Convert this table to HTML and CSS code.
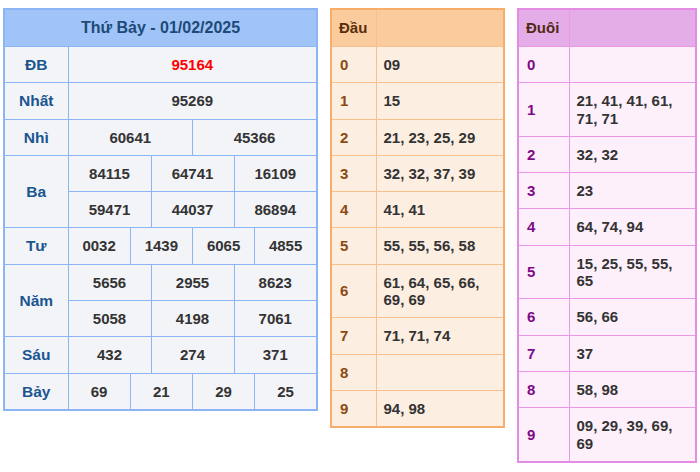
FILE: index.html
```html
<!DOCTYPE html>
<html lang="vi">
<head>
<meta charset="utf-8">
<title>XS Thứ Bảy 01/02/2025</title>
<link rel="stylesheet" href="styles.css">
</head>
<body>
<div class="wrap">
  <table class="kq">
    <colgroup>
      <col class="c-label">
      <col><col><col><col><col><col><col><col><col><col><col><col>
    </colgroup>
    <thead>
      <tr><th colspan="13" class="kq-head">Thứ Bảy - 01/02/2025</th></tr>
    </thead>
    <tbody>
      <tr><td class="lbl">ĐB</td><td colspan="12" class="db">95164</td></tr>
      <tr><td class="lbl">Nhất</td><td colspan="12">95269</td></tr>
      <tr><td class="lbl">Nhì</td><td colspan="6">60641</td><td colspan="6">45366</td></tr>
      <tr><td class="lbl" rowspan="2">Ba</td><td colspan="4">84115</td><td colspan="4">64741</td><td colspan="4">16109</td></tr>
      <tr><td colspan="4">59471</td><td colspan="4">44037</td><td colspan="4">86894</td></tr>
      <tr><td class="lbl">Tư</td><td colspan="3">0032</td><td colspan="3">1439</td><td colspan="3">6065</td><td colspan="3">4855</td></tr>
      <tr><td class="lbl" rowspan="2">Năm</td><td colspan="4">5656</td><td colspan="4">2955</td><td colspan="4">8623</td></tr>
      <tr><td colspan="4">5058</td><td colspan="4">4198</td><td colspan="4">7061</td></tr>
      <tr><td class="lbl">Sáu</td><td colspan="4">432</td><td colspan="4">274</td><td colspan="4">371</td></tr>
      <tr><td class="lbl">Bảy</td><td colspan="3">69</td><td colspan="3">21</td><td colspan="3">29</td><td colspan="3">25</td></tr>
    </tbody>
  </table>

  <table class="lt dau">
    <colgroup><col class="c-k"><col></colgroup>
    <thead><tr><th>Đầu</th><th></th></tr></thead>
    <tbody>
      <tr><td class="k">0</td><td>09</td></tr>
      <tr><td class="k">1</td><td>15</td></tr>
      <tr><td class="k">2</td><td>21, 23, 25, 29</td></tr>
      <tr><td class="k">3</td><td>32, 32, 37, 39</td></tr>
      <tr><td class="k">4</td><td>41, 41</td></tr>
      <tr><td class="k">5</td><td>55, 55, 56, 58</td></tr>
      <tr><td class="k">6</td><td>61, 64, 65, 66, 69, 69</td></tr>
      <tr><td class="k">7</td><td>71, 71, 74</td></tr>
      <tr><td class="k">8</td><td></td></tr>
      <tr><td class="k">9</td><td>94, 98</td></tr>
    </tbody>
  </table>

  <table class="lt duoi">
    <colgroup><col class="c-k"><col></colgroup>
    <thead><tr><th>Đuôi</th><th></th></tr></thead>
    <tbody>
      <tr><td class="k">0</td><td></td></tr>
      <tr><td class="k">1</td><td>21, 41, 41, 61, 71, 71</td></tr>
      <tr><td class="k">2</td><td>32, 32</td></tr>
      <tr><td class="k">3</td><td>23</td></tr>
      <tr><td class="k">4</td><td>64, 74, 94</td></tr>
      <tr><td class="k">5</td><td>15, 25, 55, 55, 65</td></tr>
      <tr><td class="k">6</td><td>56, 66</td></tr>
      <tr><td class="k">7</td><td>37</td></tr>
      <tr><td class="k">8</td><td>58, 98</td></tr>
      <tr><td class="k">9</td><td>09, 29, 39, 69, 69</td></tr>
    </tbody>
  </table>
</div>
</body>
</html>
```

FILE: styles.css
```css
html, body {
  background: #ffffff;
}
body {
  margin: 8px 3px;
  font-family: "Liberation Sans", Arial, sans-serif;
  font-size: 15px;
  font-weight: bold;
  color: #333333;
}
.wrap {
  display: flex;
  align-items: flex-start;
  gap: 12px;
}
table {
  border-collapse: collapse;
  table-layout: fixed;
}
td, th {
  padding: 9px 0;
  line-height: 17.3px;
  font-weight: bold;
}

/* main results table */
.kq {
  width: 315px;
  border: 2px solid #8cb5f5;
  background: #f3f4f8;
}
.kq .c-label { width: 64px; }
.kq td {
  border: 1px solid #8cb5f5;
  text-align: center;
  color: #333333;
}
.kq .kq-head {
  background: #a0c4f8;
  color: #1d4a77;
  font-size: 16px;
  line-height: 18px;
  padding: 9px 0;
  border-bottom: 1px solid #8cb5f5;
}
.kq td.lbl {
  color: #1a5590;
  font-size: 15.5px;
}
.kq td.db {
  color: #ff0000;
}

/* loto tables */
.lt {
  border-width: 2px;
  border-style: solid;
}
.lt th, .lt td {
  border-width: 1px;
  border-style: solid;
  text-align: left;
  padding-left: 7px;
  padding-right: 6px;
}
.lt th {
  line-height: 18px;
  padding-top: 9px;
  padding-bottom: 9px;
}
.lt td.k {
  padding-left: 8px;
}

.dau {
  width: 175px;
  border-color: #f9ad6a;
  background: #fdeee2;
}
.dau .c-k { width: 45px; }
.dau th, .dau td { border-color: #f8c08c; }
.dau th {
  background: #f9cb9d;
  color: #5b2c0b;
}
.dau td.k { color: #8a4a10; }

.duoi {
  width: 180px;
  border-color: #e48be4;
  background: #fdf0fb;
}
.duoi .c-k { width: 51px; }
.duoi th, .duoi td { border-color: #ea98e8; }
.duoi th {
  background: #e5ade7;
  color: #4f2a12;
}
.duoi td.k { color: #7e0a86; }
```
